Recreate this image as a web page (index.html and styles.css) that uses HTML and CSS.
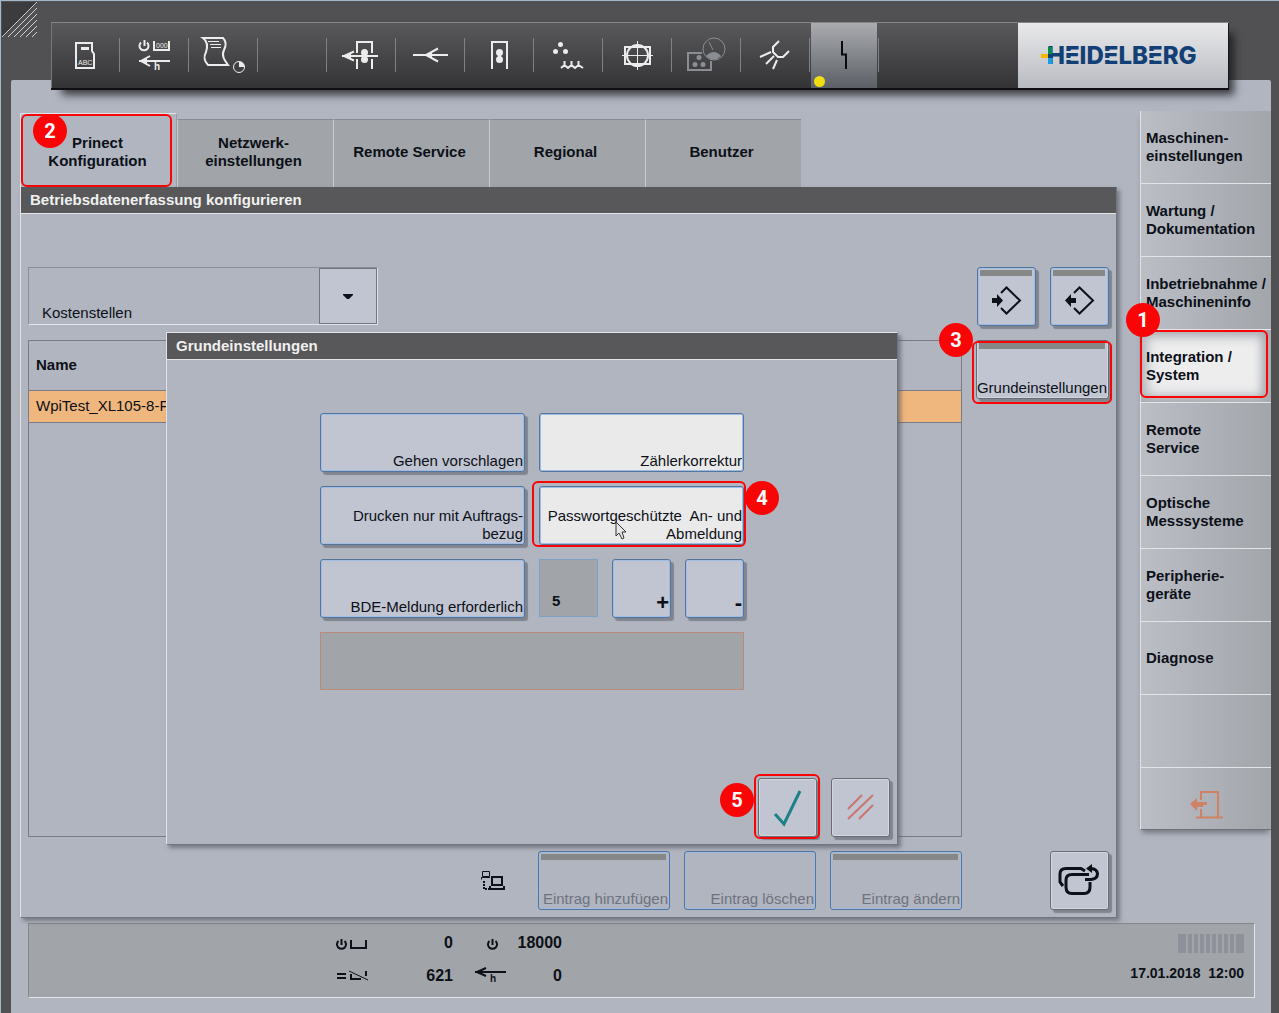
FILE: index.html
```html
<!DOCTYPE html>
<html lang="de">
<head>
  <meta charset="UTF-8" />
  <meta name="viewport" content="width=device-width, initial-scale=1.0"/>
  <title>Prinect Konfiguration</title>
  <link rel="stylesheet" href="styles.css">
</head>
<body>

  <header class="top">
    <svg class="corner" viewBox="0 0 36 36" aria-hidden="true">
      <path class="corner-fill" d="M0 0H36L0 36Z"/>
      <path d="M0 35L35 0M6 35L35 6M12 35L35 12M18 35L35 18M24 35L35 24M30 35L35 30"/>
    </svg>

    <nav class="toolbar">
      <button class="tool" aria-label="Auftrag">
        <svg viewBox="51 23 68 66"><path d="M76 43H92V51L94 54V68H76Z"/><path class="solid" d="M81 47h8v3h-8z"/><text x="78" y="65" font-size="7">ABC</text></svg>
      </button>
      <button class="tool" aria-label="Zähler">
        <svg viewBox="120 23 68 66"><path d="M141 42.5A4.5 4.5 0 1 0 147 42.5M144.5 40V46M154 41V50H169V41M139 61H170M150 56L141 61L150 66"/><path class="solid" d="M140 61L147 58V64Z"/><text x="156" y="48" font-size="7">000</text><text x="154" y="70" font-size="10" font-weight="bold">h</text></svg>
      </button>
      <button class="tool" aria-label="Protokoll">
        <svg viewBox="189 23 68 66"><path d="M203 38H223C227 42 226 46 224 50C221 56 225 61 228 65H208C203 60 204 56 206 52C208 46 207 41 203 38Z"/><path class="thin" d="M208 41.5H219M210 44.5H221M211 47.5H221"/><circle class="thin" cx="239" cy="67" r="5.5"/><path class="solid" d="M239 67V61.5A5.5 5.5 0 0 1 244.5 67Z"/></svg>
      </button>
      <button class="tool" aria-label="Leer"></button>
      <button class="tool" aria-label="Einzug">
        <svg viewBox="327 23 68 66"><path d="M357 53V42H372V53M357 59V69M372 59V69M342 56H378M354 51.5L344 56L354 60.5"/><path class="solid" d="M344 56L351 53V59Z"/><circle class="solid" cx="364.5" cy="52.5" r="3.5"/><circle class="solid" cx="364.5" cy="59.5" r="3.5"/></svg>
      </button>
      <button class="tool" aria-label="Bogenlauf">
        <svg viewBox="396 23 68 66"><path d="M413 55H448M438 48.5L426 55L438 61.5"/><path class="solid" d="M425 55L432 52V58Z"/></svg>
      </button>
      <button class="tool" aria-label="Druckwerk">
        <svg viewBox="465 23 68 66"><path d="M492 69V42H507V69"/><path class="solid" d="M498 52h3v8h-3z"/><circle class="solid" cx="499.5" cy="52.5" r="3.5"/><circle class="solid" cx="499.5" cy="59.5" r="3.5"/></svg>
      </button>
      <button class="tool" aria-label="Feuchtung">
        <svg viewBox="534 23 68 66"><circle class="solid" cx="560.5" cy="44.5" r="2.5"/><circle class="solid" cx="555.5" cy="51.5" r="2.5"/><circle class="solid" cx="565.5" cy="51.5" r="2.5"/><path class="wave" d="M561 68L564.500 65V61V65L568 68L571.500 65V61V65L575 68L578.500 65V61V65L583 68"/></svg>
      </button>
      <button class="tool" aria-label="Register">
        <svg viewBox="603 23 68 66"><path d="M625 47H650V64H625Z"/><circle cx="637.5" cy="55.5" r="10.5"/><path class="thin" d="M622 55.5H653M637.5 41V70"/></svg>
      </button>
      <button class="tool tool-off" aria-label="Farbmessung">
        <svg viewBox="672 23 68 66"><path d="M702 53H688V70H711V61"/><circle class="thin" cx="714" cy="49" r="11"/><path class="solid" d="M706 56Q714 48 721 56Q714 63 706 56Z"/><path class="thin" d="M709 42L713 50"/><circle class="solid" cx="699" cy="57.5" r="2.5"/><circle class="solid" cx="695" cy="64.5" r="2.5"/><circle class="solid" cx="703" cy="64.5" r="2.5"/></svg>
      </button>
      <button class="tool" aria-label="Puder">
        <svg viewBox="741 23 68 66"><path d="M779 41L773 47V52L778 57H783L789 51M760 57L771 52M766 64L774 56M773 69L777 60"/></svg>
      </button>
      <button class="tool tool-active" aria-label="Störungen">
        <svg viewBox="810 23 68 66"><path d="M842 41V54.5H846V69"/><circle class="lamp" cx="819.5" cy="81.5" r="5.5"/></svg>
      </button>

      <div class="brand">
        <svg class="brand-cross" viewBox="0 0 12 17" aria-hidden="true"><path fill="#f5b800" d="M0 7h8v4H0z"/><path fill="#0a8a4a" d="M7 0h4v7H7z"/><path fill="#123f75" d="M7 7h5v4H7z"/><path fill="#1c9be0" d="M7 11h4v6H7z"/></svg>
        <span class="brand-name">H<i>E</i>ID<i>E</i>LB<i>E</i>RG</span>
      </div>
    </nav>
  </header>

  <div class="surface">
    <div class="columns">
      <main class="content">
        <div class="tabs">
          <button class="tab tab-active">Prinect<br>Konfiguration
            <span class="mark mark-tab"></span><span class="badge badge-2">2</span>
          </button>
          <button class="tab">Netzwerk-<br>einstellungen</button>
          <button class="tab">Remote Service</button>
          <button class="tab">Regional</button>
          <button class="tab">Benutzer</button>
        </div>

        <section class="window">
          <h1 class="titlebar">Betriebsdatenerfassung konfigurieren</h1>
          <div class="panel">
            <div class="field">
              <label for="kostenstellen">Kostenstellen</label>
              <div class="drop">
                <select id="kostenstellen"><option></option></select>
                <svg viewBox="0 0 10 5" aria-hidden="true"><path d="M0 0H10V1L6 5H4L0 1Z"/></svg>
              </div>
            </div>

            <div class="pair">
              <button class="btn btn-icon bar" aria-label="Laden">
                <svg viewBox="979 269 55 55"><path d="M1001 293L1006.5 287.5L1020 300.5L1006.5 313.5L1001 308"/><path class="solid" d="M992 298H997V294L1003 300.5L997 307V303H992Z"/></svg>
              </button>
              <button class="btn btn-icon bar" aria-label="Speichern">
                <svg viewBox="1052 269 55 55"><path d="M1074 293L1079.5 287.5L1093 300.5L1079.5 313.5L1074 308"/><path class="solid" d="M1065 300.5L1071 294V298H1076V303H1071V307Z"/></svg>
              </button>
            </div>

            <div class="list">
              <table>
                <thead><tr><th>Name</th></tr></thead>
                <tbody><tr><td>WpiTest_XL105-8-F</td></tr></tbody>
              </table>
            </div>

            <div class="side-actions">
              <button class="btn btn-grey bar">Grundeinstellungen
                <span class="mark mark-side"></span><span class="badge badge-3">3</span>
              </button>
            </div>

            <div class="actions">
              <svg class="network" viewBox="482 869 25 21" aria-hidden="true">
                <path class="thin" d="M483.5 870.5H490.5V875.5H483.5ZM482.5 878.5V876.5H491"/>
                <path d="M493 876H503V884H493ZM491 885V888H505V885"/>
                <path class="dots" d="M485 880V888H490"/>
              </svg>
              <button class="btn btn-off bar" disabled>Eintrag hinzufügen</button>
              <button class="btn btn-off" disabled>Eintrag löschen</button>
              <button class="btn btn-off bar" disabled>Eintrag ändern</button>
            </div>

            <div class="pair">
              <button class="btn btn-icon btn-grey" aria-label="Zurück">
                <svg class="heavy" viewBox="1053 853 55 55"><path d="M1064 886L1061 882V874Q1061 868.5 1067 868.5H1082L1086 871M1091 882V887Q1091 893.5 1085 893.5H1073Q1067 893.5 1067 887V880Q1067 874.5 1073 874.5H1090M1086 879.5H1092Q1098.5 879 1098.5 873.5Q1098 869 1092 868.5"/><path class="solid" d="M1087 868.5L1093 864V873Z"/></svg>
              </button>
            </div>
          </div>

          <section class="dialog">
            <h2 class="titlebar">Grundeinstellungen</h2>
            <div class="dialog-grid">
              <button class="btn">Gehen vorschlagen</button>
              <button class="btn btn-on">Zählerkorrektur</button>
              <button class="btn">Drucken nur mit Auftrags-<br>bezug</button>
              <button class="btn btn-on">Passwortgeschützte&nbsp; An- und<br>Abmeldung
                <span class="mark mark-login"></span><span class="badge badge-4">4</span>
                <svg class="cursor" viewBox="0 0 12 19"><path d="M1 1V15L4 12L7 18L9 17L7 11H11Z"/></svg>
              </button>
              <button class="btn">BDE-Meldung erforderlich</button>
              <div class="stepper">
                <input type="text" value="5" aria-label="Anzahl">
                <button class="btn btn-step">+</button>
                <button class="btn btn-step">-</button>
              </div>
              <div class="message"></div>
            </div>
            <div class="dialog-foot">
              <button class="btn btn-icon btn-grey" aria-label="OK">
                <svg class="ok" viewBox="760 780 55 55"><path d="M775 814L784 824L800 791"/></svg>
                <span class="mark mark-ok"></span><span class="badge badge-5">5</span>
              </button>
              <button class="btn btn-icon btn-grey" aria-label="Abbrechen">
                <svg class="cancel" viewBox="833 780 55 55"><path d="M848 809L862 795M848 819L873 795M859 819L873 805"/></svg>
              </button>
            </div>
          </section>
        </section>
      </main>

      <nav class="menu">
        <button class="menu-item">Maschinen-<br>einstellungen</button>
        <button class="menu-item">Wartung /<br>Dokumentation</button>
        <button class="menu-item">Inbetriebnahme /<br>Maschineninfo</button>
        <button class="menu-item menu-active">Integration /<br>System
          <span class="mark mark-menu"></span><span class="badge badge-1">1</span>
        </button>
        <button class="menu-item">Remote<br>Service</button>
        <button class="menu-item">Optische<br>Messsysteme</button>
        <button class="menu-item">Peripherie-<br>geräte</button>
        <button class="menu-item">Diagnose</button>
        <div class="menu-item"></div>
        <button class="menu-item menu-exit" aria-label="Beenden">
          <svg viewBox="1190 790 34 29"><path d="M1201 800V792H1218V817M1201 809V817M1196 817.5H1223"/><path class="solid" d="M1190 804L1197 798V802H1207V805H1203V807H1197V811Z"/></svg>
        </button>
      </nav>
    </div>

    <footer class="status">
      <div class="counters">
        <svg viewBox="335 934 34 18"><path d="M338.5 941A4.5 4.5 0 1 0 344.5 941M341.500 939V945M351 940V948H366V940"/></svg>
        <span>0</span>
        <svg viewBox="475 934 34 18"><path d="M489.5 941A4.5 4.5 0 1 0 495.5 941M492.500 939V945"/></svg>
        <span>18000</span>
        <svg viewBox="335 967 34 18"><path d="M337 974H346M337 978H346M351 974V979H361M366 971V976"/><path class="thin" d="M349 971L368 980"/></svg>
        <span>621</span>
        <svg viewBox="475 967 34 18"><path d="M475 972H506M486 968L477 972L486 976"/><text x="490" y="982" font-size="10" font-weight="bold">h</text></svg>
        <span>0</span>
      </div>
      <div class="clock">
        <div class="signal"><i></i><i></i><i></i><i></i><i></i><i></i><i></i><i></i><i></i><i></i></div>
        <time>17.01.2018&nbsp; 12:00</time>
      </div>
    </footer>
  </div>

</body>
</html>
```
FILE: styles.css
```css
:root {
  --surface: #b1b5c0;
  --frame: #515153;
  --field: #a1a4a8;
  --key: #c1c5d1;
  --line: #787c86;
  --light: #e2e4ea;
  --blue: #56759b;
  --blue-light: #9dbde6;
  --red: #fa0505;
  --text: #0c1018;
}

* {
  box-sizing: border-box;
}

body {
  margin: 0;
  min-height: 100vh;
  display: flex;
  flex-direction: column;
  font-family: "Liberation Sans", Arial, sans-serif;
  font-size: 15px;
  line-height: 18px;
  color: var(--text);
  background: var(--frame);
  box-shadow: inset 1px 1px 0 #a4b8cc;
}

button, input, select {
  font: inherit;
  color: inherit;
  margin: 0;
  padding: 0;
  border: none;
  border-radius: 0;
}

svg {
  display: block;
  fill: none;
  stroke: currentColor;
  stroke-width: 2;
}

svg .solid,
svg text {
  fill: currentColor;
  stroke: none;
}

svg .thin {
  stroke-width: 1;
}

/* top bar */
.top {
  position: relative;
  z-index: 1;
  display: flex;
  align-items: flex-start;
  padding: 0 50px 0 2px;
}

.corner {
  width: 36px;
  height: 36px;
  margin: 2px 13px 0 0;
  stroke: #d0d2d4;
  stroke-width: 1;
}

.corner .corner-fill {
  fill: #3c3c3f;
  stroke: none;
}

.toolbar {
  flex: 1;
  display: flex;
  height: 68px;
  margin-top: 22px;
  border-top: 1px solid #858587;
  border-bottom: 2px solid #101012;
  background: linear-gradient(#59595b, #343436);
  box-shadow: inset 1px 0 0 #77777a, 8px 8px 8px -3px rgba(20, 20, 24, 0.75);
}

.tool {
  width: 69px;
  color: #ececec;
  background: linear-gradient(#808184, #808184) no-repeat right 15px / 1px 34px;
}

.tool svg {
  width: 68px;
  height: 66px;
}

.tool-off {
  color: #8b8d94;
}

.tool-active {
  color: #0b0b0d;
  background:
    linear-gradient(#a9abaf, #5c6066) no-repeat 1px 0 / 66px 100%,
    linear-gradient(#808184, #808184) no-repeat right 15px / 1px 34px;
}

.lamp {
  fill: #f0de10;
  stroke: none;
}

.brand {
  display: flex;
  align-items: center;
  width: 211px;
  margin-left: auto;
  padding-left: 23px;
  border-right: 1px solid #17171a;
  color: #123f75;
  background: linear-gradient(#e9e9eb, #b8bbc1);
}

.brand-cross {
  position: relative;
  z-index: 1;
  width: 12px;
  height: 17px;
  margin-right: -6px;
  stroke: none;
}

.brand-name {
  font: 800 24px/26px Inter, sans-serif;
}

/* the bars of the E are cut apart */
.brand-name i {
  position: relative;
  font-style: normal;
}

.brand-name i::after {
  content: "";
  position: absolute;
  inset: 0;
  background:
    linear-gradient(#d6d7da, #d6d7da) no-repeat 0 10px / 100% 2px,
    linear-gradient(#d0d2d5, #d0d2d5) no-repeat 0 17px / 100% 2px;
}

/* work surface */
.surface {
  flex: 1;
  display: flex;
  flex-direction: column;
  margin: -10px 8px 0 11px;
  padding: 31px 0 15px;
  border-radius: 2px 2px 0 0;
  background: var(--surface);
}

.columns {
  flex: 1;
  display: flex;
  gap: 23px;
  padding-left: 9px;
}

.content {
  flex: 1;
  display: flex;
  flex-direction: column;
  padding-top: 2px;
}

.tabs {
  display: flex;
  align-items: flex-end;
  height: 74px;
}

.tab {
  flex: 0 1 156px;
  height: 68px;
  padding: 0 4px 3px 0;
  font-weight: bold;
  background: var(--field);
  border-left: 1px solid #c9ccd4;
  border-top: 1px solid #878a93;
}

.tab-active {
  position: relative;
  flex-basis: 157px;
  height: 74px;
  padding: 3px 2px 0 0;
  background: var(--surface);
  border: 1px solid var(--light);
  border-bottom: none;
  border-right-color: #989ba5;
}

/* windows */
.window {
  position: relative;
  flex: 1;
  display: flex;
  flex-direction: column;
}

.window,
.dialog {
  background: var(--surface);
  border-left: 1px solid var(--light);
  border-right: 1px solid #71757e;
  border-bottom: 1px solid #71757e;
  box-shadow: 3px 3px 4px rgba(80, 83, 92, 0.6);
}

.titlebar {
  margin: 0;
  padding: 4px 9px;
  border-bottom: 1px solid var(--light);
  font-size: 15px;
  line-height: 18px;
  color: #f0f0f0;
  background: #58585a;
}

.panel {
  flex: 1;
  display: grid;
  grid-template-columns: 1fr 133px;
  grid-template-rows: 59px 1fr 59px;
  gap: 14px;
  padding: 53px 7px 7px;
}

.field {
  display: flex;
  justify-content: space-between;
  align-items: flex-end;
  width: 350px;
  height: 58px;
  border: 1px solid var(--light);
  border-top-color: #8b8f99;
  border-left-color: #8b8f99;
}

.field label {
  padding: 0 0 2px 13px;
}

.drop {
  display: grid;
  width: 58px;
  height: 56px;
}

.drop > * {
  grid-area: 1 / 1;
}

.drop select {
  appearance: none;
  background: var(--key);
  border: 1px solid #71757f;
}

.drop svg {
  width: 10px;
  height: 5px;
  place-self: center;
  pointer-events: none;
  fill: var(--text);
  stroke: none;
}

.pair {
  display: flex;
  justify-content: flex-end;
  gap: 14px;
}

.list {
  border: 1px solid var(--line);
}

table {
  width: 100%;
  border-collapse: collapse;
}

th,
td {
  padding: 0 7px;
  text-align: left;
}

th {
  height: 49px;
}

td {
  height: 32px;
  background: #efb67e;
  border-top: 1px solid var(--line);
  border-bottom: 1px solid var(--line);
}

.actions {
  display: flex;
  justify-content: flex-end;
  align-items: center;
  gap: 14px;
}

.actions .btn {
  width: 132px;
}

.network {
  width: 25px;
  height: 21px;
  margin-right: 18px;
}

.network .dots {
  stroke-dasharray: 2 1;
}

/* keys */
.btn {
  position: relative;
  display: flex;
  align-items: flex-end;
  justify-content: flex-end;
  width: 100%;
  height: 59px;
  padding: 0 1px 1px 0;
  text-align: right;
  white-space: nowrap;
  background-color: var(--key);
  border: 1px solid var(--blue);
  border-radius: 3px;
  box-shadow: inset 0 0 0 1px var(--blue-light), 3px 3px 1px #80848e;
}

.btn-grey {
  border-color: #686c75;
  box-shadow: inset 0 0 0 1px #d3d6dd, 3px 3px 1px #80848e;
}

.btn-on {
  background-color: #eaeaea;
  box-shadow: inset 0 0 0 1px var(--blue-light);
}

.btn-off {
  color: #6f737e;
  background-color: transparent;
  box-shadow: inset 0 0 0 1px var(--blue-light);
}

.bar {
  background-image: linear-gradient(#868888, #868888);
  background-repeat: no-repeat;
  background-position: 2px 2px;
  background-size: calc(100% - 5px) 6px;
}

.btn-icon {
  width: 59px;
  padding: 0;
  align-items: center;
  justify-content: center;
}

.btn-icon svg {
  width: 55px;
  height: 55px;
}

.btn .heavy {
  stroke-width: 3;
}

.ok {
  color: #1c8288;
  stroke-width: 3;
}

.cancel {
  color: #c9756c;
}

/* dialog */
.dialog {
  position: absolute;
  inset: 145px 218px 72px 145px;
  display: flex;
  flex-direction: column;
  border-top: 1px solid var(--light);
}

.dialog-grid {
  flex: 1;
  display: grid;
  grid-template-columns: 205px 205px;
  grid-auto-rows: 59px;
  gap: 14px;
  justify-content: center;
  padding-top: 53px;
}

/* plain blocks, so that a <br> can split the label */
.dialog-grid > .btn {
  display: block;
  padding-top: 37px;
}

.dialog-grid > .btn:has(br) {
  padding-top: 19px;
}

.stepper {
  display: grid;
  grid-template-columns: repeat(3, 1fr);
  gap: 14px;
}

.stepper input {
  width: 59px;
  height: 58px;
  padding: 24px 0 0 12px;
  font-weight: bold;
  background: var(--field);
  border: 1px solid #7f9fcb;
}

.btn-step {
  padding-bottom: 5px;
  font-size: 22px;
  font-weight: bold;
}

.message {
  grid-column: 1 / -1;
  height: 58px;
  background: var(--field);
  border: 1px solid #b98a74;
}

.dialog-foot {
  display: flex;
  justify-content: flex-end;
  gap: 14px;
  padding: 7px;
}

.cursor {
  position: absolute;
  left: 75px;
  top: 34px;
  width: 12px;
  height: 19px;
  fill: #e8e8e8;
  stroke: #333;
  stroke-width: 1;
}

/* side menu */
.menu {
  align-self: flex-start;
  width: 131px;
  border-left: 1px solid var(--light);
  border-bottom: 1px solid #6e7178;
  background: linear-gradient(90deg, #bbbec5, #a2a5aa);
  box-shadow: 0 5px 5px -2px rgba(80, 83, 92, 0.6);
}

.menu-item {
  position: relative;
  display: block;
  width: 100%;
  height: 73px;
  padding-left: 5px;
  text-align: left;
  font-weight: bold;
  white-space: nowrap;
  background: none;
  border-bottom: 1px solid var(--light);
}

.menu-active {
  background: #ededee;
  box-shadow: inset -6px 0 10px 2px #a8abb0, inset 0 0 12px 6px #b0b3b8;
}

.menu-exit {
  height: 61px;
  padding: 12px 0 0 49px;
  color: #cf8263;
  border-bottom: none;
}

.menu-exit svg {
  width: 34px;
  height: 29px;
}

/* numbered callouts */
.mark {
  position: absolute;
  border: 2px solid var(--red);
  border-radius: 6px;
}

.mark-tab { inset: 0 4px 0 0; }
.mark-menu { inset: 0 3px 4px -1px; z-index: 1; }
.mark-side { inset: 0 -4px -6px -5px; }
.mark-login { inset: -6px -3px -3px -8px; }
.mark-ok { inset: -5px -4px -3px -5px; }

.badge {
  position: absolute;
  z-index: 2;
  width: 34px;
  height: 34px;
  border-radius: 50%;
  font: bold 20px/34px Roboto, sans-serif;
  text-align: center;
  color: #fff;
  background: var(--red);
}

.badge-1 { left: -15px; top: -27px; }
.badge-2 { left: 12px; top: 0; }
.badge-3 { left: -38px; top: -18px; }
.badge-4 { left: 205px; top: -6px; }
.badge-5 { left: -39px; top: 4px; }

/* status line */
.status {
  display: flex;
  justify-content: space-between;
  margin: 5px 16px 0 17px;
  padding: 10px 10px 12px 306px;
  border: 1px solid var(--light);
  border-top-color: #83868d;
  border-left-color: #83868d;
  font-weight: bold;
  background: var(--field);
}

.counters {
  display: grid;
  grid-template-columns: 34px 84px 34px 53px;
  row-gap: 15px;
  align-content: start;
  font-size: 16px;
  text-align: right;
}

.counters svg {
  width: 34px;
  height: 18px;
}

.counters svg:nth-of-type(even) {
  margin-left: 22px;
}

.counters span:nth-of-type(even) {
  margin-left: 22px;
  margin-right: -22px;
}

.clock {
  display: flex;
  flex-direction: column;
  align-items: flex-end;
  gap: 11px;
  font-size: 14px;
}

.signal {
  display: flex;
  gap: 2px;
  height: 19px;
}

.signal i {
  width: 4px;
  background: #8e9199;
}

.signal i:first-child,
.signal i:last-child {
  width: 8px;
}
```
